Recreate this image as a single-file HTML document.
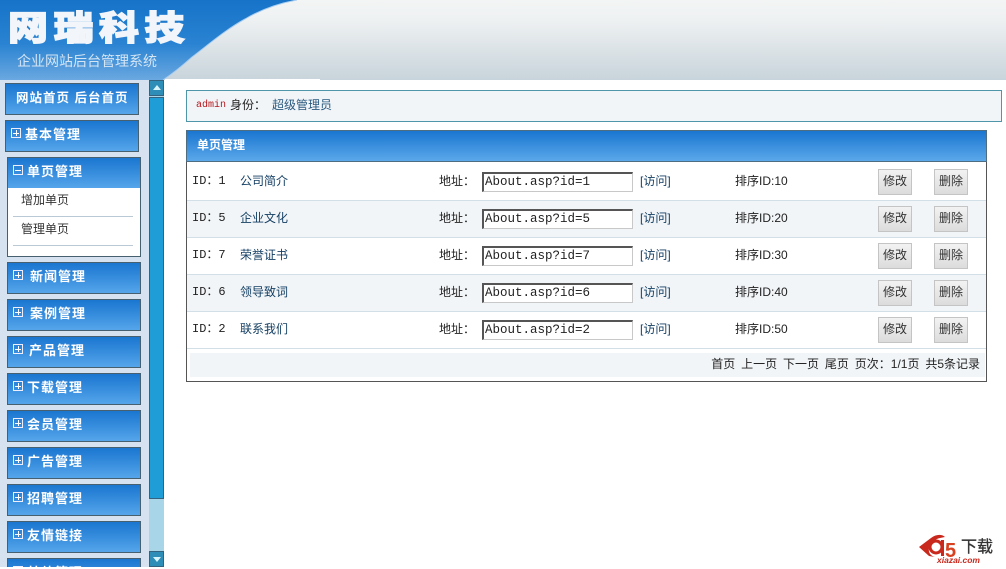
<!DOCTYPE html>
<html lang="zh"><head><meta charset="utf-8"><style>
html,body{margin:0;padding:0;background:#fff;width:1006px;height:569px;overflow:hidden}
body{position:relative;font:12px "Liberation Mono","Noto Sans CJK SC",monospace;color:#222}
.a{position:absolute;white-space:nowrap}
.cj{font-family:"Liberation Sans","Noto Sans CJK SC",sans-serif}
.btn{position:absolute;box-sizing:border-box;width:134px;height:32px;border:1px solid #47606f;background:linear-gradient(#1a76d0,#55a5ea);color:#fff;font:bold 13px/27px "Liberation Sans","Noto Sans CJK SC",sans-serif;letter-spacing:1px;white-space:nowrap}
.pm{position:absolute;left:5px;top:7px;width:8px;height:8px;border:1px solid #eef;box-sizing:content-box}
.pm:before{content:"";position:absolute;left:1px;right:1px;top:3.5px;height:1px;background:#fff}
.pm.p:after{content:"";position:absolute;top:1px;bottom:1px;left:3.5px;width:1px;background:#fff}
.row{position:absolute;left:187px;width:799px;height:37px;box-sizing:border-box;border-bottom:1px solid #d2dfe6}
.row.alt{background:#f2f5f8}
.t{position:absolute;top:9px;line-height:16px;white-space:nowrap;font-size:12px}
.cn{font-family:"Liberation Sans","Noto Sans CJK SC",sans-serif}
.link{color:#143f63}
.inp{position:absolute;left:295px;top:8px;width:151px;height:20px;box-sizing:border-box;border:1px solid #c8c8c8;border-top:2px solid #555;border-left:2px solid #555;background:#fff;font:12.5px/16px "Liberation Mono",monospace;color:#222;padding-left:1px}
.b{position:absolute;top:5px;width:34px;height:26px;box-sizing:border-box;border:1px solid #c4c4c4;background:linear-gradient(#f2f2f2,#dcdcdc);text-align:center;font:12px/23px "Liberation Sans","Noto Sans CJK SC",sans-serif;color:#333}
</style></head><body>

<svg class="a" style="left:0;top:0" width="1006" height="81" viewBox="0 0 1006 81">
<defs>
<linearGradient id="g" x1="0" y1="0" x2="0" y2="1"><stop offset="0" stop-color="#f3f5f5"/><stop offset=".25" stop-color="#eef1f2"/><stop offset="1" stop-color="#c8d4db"/></linearGradient>
<linearGradient id="bl" x1="0" y1="0" x2="0" y2="1"><stop offset="0" stop-color="#1673c8"/><stop offset=".55" stop-color="#2a83d2"/><stop offset="1" stop-color="#6aa8e0"/></linearGradient>
</defs>
<rect x="0" y="0" width="1006" height="80" fill="url(#g)"/>
<path d="M0 0 H297 C280 3 262 9 245 19 C225 30 208 45 192 57 C182 66 172 74 163 80 H0 Z" fill="url(#bl)"/>
<path d="M163 80 C172 74 182 66 192 57 C208 45 225 30 245 19 C262 9 280 3 297 0" fill="none" stroke="#a6cdf0" stroke-width="1"/>
<rect x="165" y="79" width="155" height="1" fill="#fff"/>
</svg>

<div class="a cj" style="left:8px;top:7px;font-size:40px;line-height:44px;font-weight:900;color:#f2f6fb;letter-spacing:5.5px;-webkit-text-stroke:1.5px #f2f6fb;transform:scaleY(.85);transform-origin:0 50%">网瑞科技</div>
<div class="a cj" style="left:17px;top:52px;font-size:14px;line-height:18px;color:#d5e5f4">企业网站后台管理系统</div>

<div class="a" style="left:0;top:80px;width:149px;height:487px;background:#d6e2ef"></div>
<div class="a" style="left:149px;top:80px;width:15px;height:487px;background:#a9d5e9"></div>
<div class="a" style="left:149px;top:80px;width:15px;height:16px;background:#2e8eb8;border:1px solid #33637e;box-sizing:border-box"></div>
<div class="a" style="left:153px;top:85px;width:0;height:0;border-left:4px solid transparent;border-right:4px solid transparent;border-bottom:5px solid #d8f4fb"></div>
<div class="a" style="left:149px;top:97px;width:15px;height:402px;background:#1f9dd6;border:1px solid #33637e;box-sizing:border-box"></div>
<div class="a" style="left:149px;top:551px;width:15px;height:16px;background:#2e8eb8;border:1px solid #33637e;box-sizing:border-box"></div>
<div class="a" style="left:153px;top:557px;width:0;height:0;border-left:4px solid transparent;border-right:4px solid transparent;border-top:5px solid #d8f4fb"></div>

<div class="btn" style="left:5px;top:83px;height:32px;padding-left:10px;font-size:12.5px;line-height:28px">网站首页 后台首页</div>
<div class="btn" style="left:5px;top:120px;padding-left:19px"><span class="pm p"></span>基本管理</div>
<div class="a" style="left:7px;top:157px;width:134px;height:100px;box-sizing:border-box;border:1px solid #47606f;background:#fff"></div>
<div class="btn" style="left:7px;top:157px;height:31px;padding-left:19px;border-bottom:0"><span class="pm"></span>单页管理</div>
<div class="a cn" style="left:21px;top:192px;line-height:17px;color:#333">增加单页</div>
<div class="a" style="left:13px;top:216px;width:120px;height:1px;background:#b9c9d6"></div>
<div class="a cn" style="left:21px;top:221px;line-height:17px;color:#333">管理单页</div>
<div class="a" style="left:13px;top:245px;width:120px;height:1px;background:#b9c9d6"></div>
<div class="btn" style="left:7px;top:262px;padding-left:22px"><span class="pm p"></span>新闻管理</div>
<div class="btn" style="left:7px;top:299px;padding-left:22px"><span class="pm p"></span>案例管理</div>
<div class="btn" style="left:7px;top:336px;padding-left:21px"><span class="pm p"></span>产品管理</div>
<div class="btn" style="left:7px;top:373px;padding-left:19px"><span class="pm p"></span>下载管理</div>
<div class="btn" style="left:7px;top:410px;padding-left:19px"><span class="pm p"></span>会员管理</div>
<div class="btn" style="left:7px;top:447px;padding-left:19px"><span class="pm p"></span>广告管理</div>
<div class="btn" style="left:7px;top:484px;padding-left:19px"><span class="pm p"></span>招聘管理</div>
<div class="btn" style="left:7px;top:521px;padding-left:19px"><span class="pm p"></span>友情链接</div>
<div class="a" style="left:0;top:558px;width:149px;height:9px;overflow:hidden"><div class="btn" style="left:7px;top:0;padding-left:19px"><span class="pm p"></span>其他管理</div></div>

<div class="a" style="left:186px;top:90px;width:816px;height:32px;box-sizing:border-box;border:1px solid #4f97a8;background:#f2f5f8"></div>
<div class="a" style="left:196px;top:100px;font-size:10px;line-height:12px;color:#b5171c">admin</div>
<div class="a cn" style="left:230px;top:97px;line-height:17px;color:#222">身份：</div>
<div class="a cn" style="left:272px;top:97px;line-height:17px;color:#2a5a80">超级管理员</div>

<div class="a" style="left:186px;top:130px;width:801px;height:252px;box-sizing:border-box;border:1px solid #555"></div>
<div class="a cj" style="left:186px;top:130px;width:801px;height:32px;box-sizing:border-box;border:1px solid #4f6d80;background:linear-gradient(#1a76d0,#5ba8ea);color:#fff;font-weight:bold;font-size:12px;line-height:29px;padding-left:10px">单页管理</div>

<div class="row" style="top:164px"><span class="t" style="left:5px">ID：1</span><span class="t cn link" style="left:53px">公司简介</span><span class="t cn" style="left:252px">地址：</span><div class="inp">About.asp?id=1</div><span class="t cn link" style="left:453px">[访问]</span><span class="t cn" style="left:548px">排序ID:10</span><div class="b" style="left:691px">修改</div><div class="b" style="left:747px">删除</div></div>
<div class="row alt" style="top:201px"><span class="t" style="left:5px">ID：5</span><span class="t cn link" style="left:53px">企业文化</span><span class="t cn" style="left:252px">地址：</span><div class="inp">About.asp?id=5</div><span class="t cn link" style="left:453px">[访问]</span><span class="t cn" style="left:548px">排序ID:20</span><div class="b" style="left:691px">修改</div><div class="b" style="left:747px">删除</div></div>
<div class="row" style="top:238px"><span class="t" style="left:5px">ID：7</span><span class="t cn link" style="left:53px">荣誉证书</span><span class="t cn" style="left:252px">地址：</span><div class="inp">About.asp?id=7</div><span class="t cn link" style="left:453px">[访问]</span><span class="t cn" style="left:548px">排序ID:30</span><div class="b" style="left:691px">修改</div><div class="b" style="left:747px">删除</div></div>
<div class="row alt" style="top:275px"><span class="t" style="left:5px">ID：6</span><span class="t cn link" style="left:53px">领导致词</span><span class="t cn" style="left:252px">地址：</span><div class="inp">About.asp?id=6</div><span class="t cn link" style="left:453px">[访问]</span><span class="t cn" style="left:548px">排序ID:40</span><div class="b" style="left:691px">修改</div><div class="b" style="left:747px">删除</div></div>
<div class="row" style="top:312px"><span class="t" style="left:5px">ID：2</span><span class="t cn link" style="left:53px">联系我们</span><span class="t cn" style="left:252px">地址：</span><div class="inp">About.asp?id=2</div><span class="t cn link" style="left:453px">[访问]</span><span class="t cn" style="left:548px">排序ID:50</span><div class="b" style="left:691px">修改</div><div class="b" style="left:747px">删除</div></div>

<div class="a" style="left:190px;top:353px;width:795px;height:24px;background:#f2f5f8"></div>
<div class="a cn" style="right:26px;top:356px;line-height:17px;color:#222;word-spacing:-.4px">首页&nbsp; 上一页&nbsp; 下一页&nbsp; 尾页&nbsp; 页次：1/1页&nbsp; 共5条记录</div>

<svg class="a" style="left:918px;top:532px" width="44" height="32" viewBox="0 0 44 32">
<path d="M1 15 L13 6 C18 2 24 2 27 5 L22 6 C17 7 12 11 11 16 C10 21 13 24 17 25 L11 24 Z" fill="#c9281c"/>
<circle cx="18" cy="15" r="6" fill="none" stroke="#c9281c" stroke-width="3"/>
<path d="M24.5 8 V24" stroke="#c9281c" stroke-width="3"/>
<text x="27" y="25" font-family="Liberation Sans" font-weight="bold" font-size="20" fill="#d8401f">5</text>
</svg>
<div class="a cj" style="left:961px;top:539px;font-size:16px;line-height:18px;color:#333;-webkit-text-stroke:.3px #333">下载</div>
<div class="a" style="left:937px;top:555px;font:italic bold 8.5px/10px 'Liberation Sans',sans-serif;color:#c9281c">xiazai.com</div>
</body></html>
